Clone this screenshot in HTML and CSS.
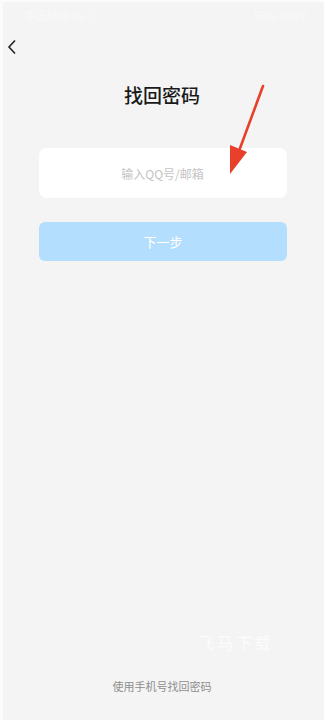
FILE: index.html
```html
<!DOCTYPE html>
<html lang="zh">
<head>
<meta charset="utf-8">
<link rel="stylesheet" href="styles.css">
</head>
<body>
<div class="screen">
  <div class="status">
    <span class="st-left">中国移动 4G ⊙</span>
    <span class="st-right">56% 10:29</span>
  </div>
  <div class="nav">
    <svg class="back" width="10" height="16" viewBox="0 0 10 16"><path d="M8 1.5 L2 8 L8 14.5" fill="none" stroke="#222" stroke-width="1.6"/></svg>
  </div>
  <h1 class="title">找回密码</h1>
  <div class="form">
    <div class="input">输入QQ号/邮箱</div>
    <div class="btn">下一步</div>
  </div>
  <div class="spacer"></div>
  <div class="watermark">飞马下载</div>
  <div class="footer">使用手机号找回密码</div>
  <svg class="arrow" width="60" height="100" viewBox="0 0 60 100"><line x1="53" y1="5" x2="29" y2="70" stroke="#e8402a" stroke-width="2.6" stroke-linecap="round"/><polygon points="20,93 20,64 37,71" fill="#e8402a"/></svg>
</div>
</body>
</html>
```
FILE: styles.css
```css
html, body { margin: 0; padding: 0; }
body {
  background: #f4f4f4;
  font-family: "Noto Sans CJK SC", "Noto Sans", sans-serif;
}
.screen {
  position: relative;
  width: 324px;
  height: 720px;
  box-sizing: border-box;
  border-left: 3px solid #fbfbfb;
  border-top: 2px solid #fcfcfc;
  display: flex;
  flex-direction: column;
  overflow: hidden;
}
.status {
  height: 26px;
  display: flex;
  justify-content: space-between;
  align-items: center;
  padding: 0 18px 0 22px;
  font-size: 11px;
  color: #f9f9f9;
}
.nav {
  height: 32px;
  display: flex;
  align-items: center;
  padding-left: 4px;
}
.back { display: block; margin-top: 5px; }
.title {
  margin: 22px 0 0;
  text-align: center;
  font-size: 19px;
  font-weight: 500;
  line-height: 26px;
  color: #1a1a1a;
  padding-right: 3px;
}
.form {
  margin: 40px 0 0 36px;
  width: 248px;
  display: flex;
  flex-direction: column;
  gap: 24px;
}
.input {
  height: 50px;
  background: #fff;
  border-radius: 8px;
  display: flex;
  align-items: center;
  justify-content: center;
  font-size: 12px;
  color: #c4c4c4;
  padding-right: 1px;
}
.btn {
  height: 39px;
  background: #b3defd;
  border-radius: 6px;
  display: flex;
  align-items: center;
  justify-content: center;
  font-size: 13px;
  color: #fff;
}
.spacer { flex: 1; }
.watermark {
  align-self: flex-end;
  margin-right: 50px;
  font-size: 16px;
  color: #fcfcfc;
  letter-spacing: 3px;
  margin-bottom: 24px;
}
.footer {
  text-align: center;
  font-size: 11px;
  color: #8f8f8f;
  margin-bottom: 26px;
  padding-right: 3px;
}
.arrow {
  position: absolute;
  left: 207px;
  top: 79px;
}
```
